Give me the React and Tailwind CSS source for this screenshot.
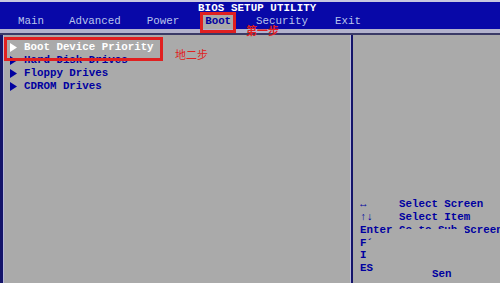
import React from 'react';

const ITEMS = ['Boot Device Priority', 'Hard Disk Drives', 'Floppy Drives', 'CDROM Drives'];

function Arrow({ white }) {
  return (
    <svg width="7" height="9" viewBox="0 0 7 9" className="shrink-0">
      <path d="M0 0 L7 4.5 L0 9 Z" fill={white ? '#ffffff' : '#0000a0'} />
    </svg>
  );
}

export default function App() {
  return (
    <div
      className="relative w-[500px] h-[283px] overflow-hidden bg-[#aaaaaa] flex flex-col text-[10.8px] font-bold"
      style={{ fontFamily: '"Liberation Mono", "DejaVu Sans Mono", monospace' }}
    >
      {/* Title + menu bar */}
      <div className="h-[2px] bg-[#c8c8e0] shrink-0" />
      <div className="h-[27px] bg-[#0808a8] shrink-0 flex flex-col">
        <div className="h-[12px] leading-[12px] text-white pl-[198px] tracking-[0.1px]">BIOS SETUP UTILITY</div>
        <div className="flex items-center h-[15px] leading-[15px] text-[#b8c4ec] font-normal">
          <span className="ml-[18px]">Main</span>
          <span className="ml-[25px]">Advanced</span>
          <span className="ml-[26px]">Power</span>
          <span className="ml-[23px] px-[3px] bg-[#aaaaaa] text-[#0000a0] font-bold">Boot</span>
          <span className="ml-[22px]">Security</span>
          <span className="ml-[27px]">Exit</span>
        </div>
      </div>
      <div className="h-[4px] bg-[#b2b2cc] shrink-0" />
      <div className="h-[2px] bg-[#3a3a66] shrink-0" />

      {/* Body */}
      <div className="flex flex-1 min-w-0">
        <div className="w-[3px] shrink-0 bg-[#14146a]" />
        <div className="w-[1px] shrink-0 bg-[#b8b8d8]" />
        <div className="w-[346px] shrink-0 pt-[6px] pl-[6px] flex flex-col">
          {ITEMS.map((it, i) => (
            <div key={it} className="flex items-center h-[13px] gap-[7px]">
              <Arrow white={i === 0} />
              <span className={i === 0 ? 'text-white' : 'text-[#0000a0]'}>{it}</span>
            </div>
          ))}
        </div>
        <div className="w-[1px] shrink-0 bg-[#b8b8d8]" />
        <div className="w-[2px] shrink-0 bg-[#14146a]" />
        <div className="flex-1 min-w-0 overflow-hidden flex flex-col justify-end pb-[8px] pl-[7px] text-[#0000a0] leading-[12.8px] whitespace-nowrap">
          <div className="flex"><span className="w-[39px] shrink-0">↔</span><span>Select Screen</span></div>
          <div className="flex"><span className="w-[39px] shrink-0">↑↓</span><span>Select Item</span></div>
          <div className="flex relative">
            <span className="w-[39px] shrink-0">Enter</span>
            <span>Go to Sub Screen</span>
            <div className="absolute left-[39px] top-[5px] w-[66px] h-[8px] bg-[#aaaaaa]" />
          </div>
          <div className="flex"><span>F´</span></div>
          <div className="flex"><span>I</span></div>
          <div className="flex relative"><span>ES</span><span className="absolute left-[72px] top-[6px]">Sen</span></div>
        </div>
      </div>

      {/* Red annotations */}
      <div className="absolute left-[200px] top-[12px] w-[36px] h-[21px] border-[3px] border-[#e02020]" />
      <div
        className="absolute z-10 left-[246px] top-[25px] text-[11px] leading-[11px] text-[#e02020] font-bold"
        style={{ fontFamily: '"Noto Sans CJK SC", sans-serif' }}
      >
        第一步
      </div>
      <div className="absolute left-[4px] top-[37px] w-[159px] h-[24px] border-[3px] border-[#e02020]" />
      <div
        className="absolute left-[175px] top-[48px] text-[11px] leading-[12px] text-[#e02020] font-normal"
        style={{ fontFamily: '"Noto Sans CJK SC", sans-serif' }}
      >
        地二步
      </div>
    </div>
  );
}
